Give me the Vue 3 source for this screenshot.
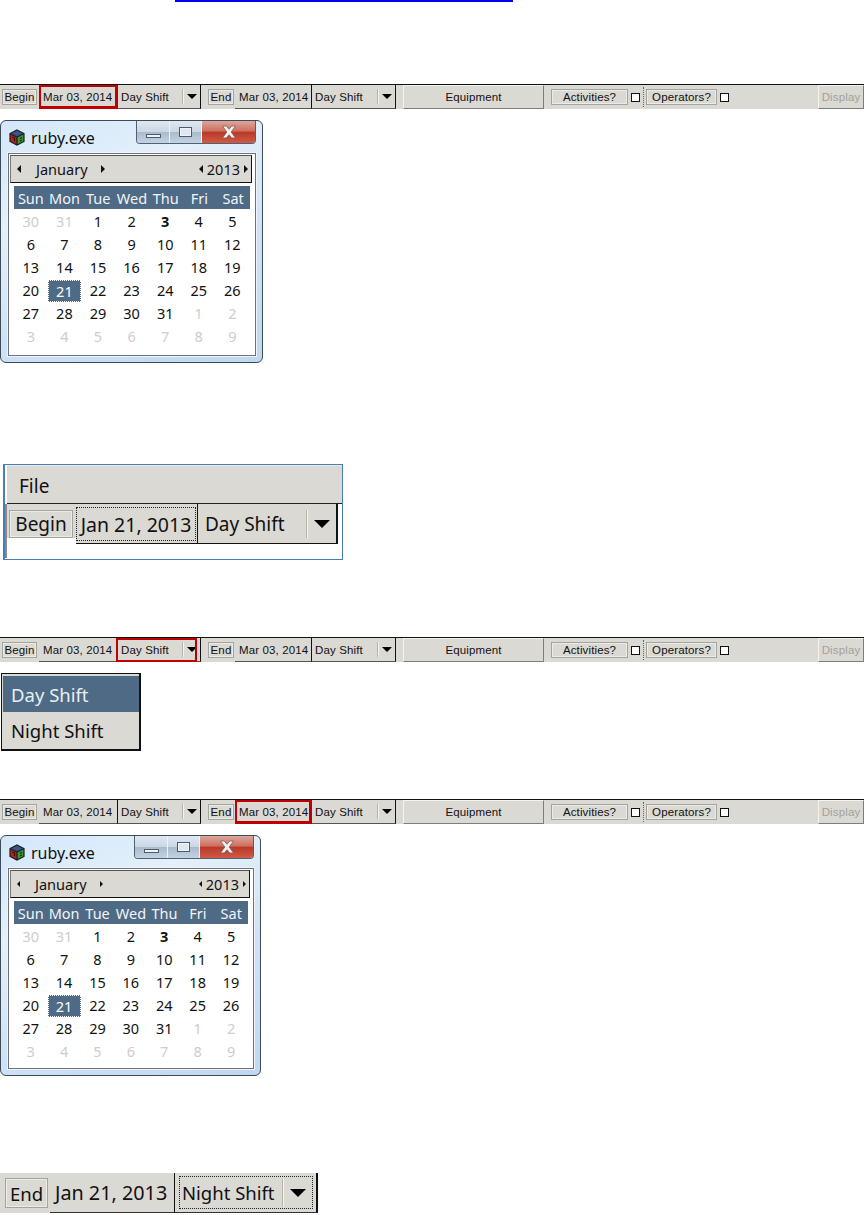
<template>
  <div class="page">
    <div class="link-line"></div>

    <template v-for="block in blocks" :key="block.id">
      <!-- toolbar strip, same in all three shots -->
      <div v-if="block.type === 'toolbar'" class="toolbar" :class="block.cls">
        <span class="tb-btn begin">Begin</span>
        <span class="cell date d1" :class="{ hot: block.hot === 'date1' }">Mar 03, 2014</span>
        <span class="cell shift s1" :class="{ 'hot-shift': block.hot === 'shift1' }">
          <span class="shift-label">Day Shift</span>
          <span class="shift-arrow"><i class="tri"></i></span>
        </span>
        <span class="tb-btn end">End</span>
        <span class="cell date d2" :class="{ hot: block.hot === 'date2' }">Mar 03, 2014</span>
        <span class="cell shift s2">
          <span class="shift-label">Day Shift</span>
          <span class="shift-arrow"><i class="tri"></i></span>
        </span>
        <span class="raised equipment">Equipment</span>
        <span class="tb-btn activities">Activities?</span>
        <span class="check"></span>
        <span class="dots"></span>
        <span class="tb-btn operators">Operators?</span>
        <span class="check"></span>
        <span class="raised display">Display</span>
      </div>

      <!-- ruby.exe calendar window -->
      <div v-else-if="block.type === 'calendar'" class="window" :class="block.cls">
        <div class="titlebar">
          <svg class="cube" width="16" height="17" viewBox="0 0 16 17">
            <path d="M8 1 15 4.500 8 8 1 4.500Z" fill="#35568f" />
            <path d="M1 4.500 8 8V16L1 12.500Z" fill="#b51e1e" />
            <path d="M15 4.500 8 8V16L15 12.500Z" fill="#2f9a2f" />
            <path d="M8 1 15 4.500V12.500L8 16 1 12.500V4.500ZM8 8V16M1 4.500 8 8 15 4.500" fill="none" stroke="#1c1c1c" stroke-width="1.200" />
            <path d="M3.500 8 5.500 9V12M11 9.500 13 8.500M11 12 13 11" fill="none" stroke="#111" stroke-width="1" />
          </svg>
          <span class="win-title">ruby.exe</span>
          <div class="win-btns">
            <span class="wb wb-min"><i></i></span>
            <span class="wb wb-max"><i></i></span>
            <span class="wb wb-close">
              <svg width="18" height="14" viewBox="0 0 16 13">
                <path d="M2 1H5.500L8 4 10.500 1H14L10 6.500 14 12H10.500L8 9 5.500 12H2L6 6.500Z" fill="#f2f2f2" stroke="#7d5a55" stroke-width=".7" />
              </svg>
            </span>
          </div>
        </div>
        <div class="cal-frame">
          <div class="cal-nav">
            <i class="small-left"></i>
            <span class="nav-month">January</span>
            <i class="small-right"></i>
            <span class="nav-spacer"></span>
            <i class="small-left"></i>
            <span class="nav-year">2013</span>
            <i class="small-right"></i>
          </div>
          <div class="cal-body">
            <div class="cal-head">
              <span v-for="d in weekdays" :key="d">{{ d }}</span>
            </div>
            <div class="cal-grid">
              <span
                v-for="(c, i) in days"
                :key="i"
                class="day"
                :class="{ muted: c.muted, sel: c.sel, bold: c.bold }"
              >{{ c.n }}</span>
            </div>
          </div>
        </div>
      </div>

      <!-- zoomed begin row -->
      <div v-else-if="block.type === 'cropBegin'" class="crop-begin">
        <div class="crop-menu"><span>File</span></div>
        <div class="crop-row">
          <span class="big-btn big-begin">Begin</span>
          <span class="big-date"><span class="focus">Jan 21, 2013</span></span>
          <span class="big-shift">
            <span class="big-label">Day Shift</span>
            <span class="big-arrow"><i class="tri big"></i></span>
          </span>
        </div>
        <div class="crop-rest"></div>
      </div>

      <!-- shift dropdown list -->
      <div v-else-if="block.type === 'menu'" class="shift-menu">
        <div class="menu-item on">Day Shift</div>
        <div class="menu-item">Night Shift</div>
      </div>

      <!-- zoomed end row -->
      <div v-else class="crop-end">
        <span class="big-btn big-end">End</span>
        <span class="end-date">Jan 21, 2013</span>
        <span class="end-shift">
          <span class="end-focus">
            <span class="end-label">Night Shift</span>
            <span class="big-arrow"><i class="tri big"></i></span>
          </span>
        </span>
      </div>
    </template>
  </div>
</template>

<script setup>
const blocks = [
  { id: 1, type: 'toolbar', hot: 'date1', cls: 'at-84' },
  { id: 2, type: 'calendar', cls: 'cal-a' },
  { id: 3, type: 'cropBegin' },
  { id: 4, type: 'toolbar', hot: 'shift1', cls: 'at-637' },
  { id: 5, type: 'menu' },
  { id: 6, type: 'toolbar', hot: 'date2', cls: 'at-799' },
  { id: 7, type: 'calendar', cls: 'cal-b' },
  { id: 8, type: 'cropEnd' }
];

const weekdays = ['Sun', 'Mon', 'Tue', 'Wed', 'Thu', 'Fri', 'Sat'];

// 42 cells: trailing December, January 2013, leading February
const days = [];
days.push({ n: 30, muted: true }, { n: 31, muted: true });
for (let n = 1; n <= 31; n++) {
  days.push({ n, bold: n === 3, sel: n === 21 });
}
for (let n = 1; n <= 9; n++) {
  days.push({ n, muted: true });
}
</script>

<style>
html, body {
  margin: 0;
  background: #fff;
}
</style>

<style scoped>
.page {
  width: 866px;
  height: 1215px;
  overflow: hidden;
  background: #fff;
  display: flex;
  flex-direction: column;
  align-items: flex-start;
  font-family: "Liberation Sans", Arial, sans-serif;
  color: #111;
}

.link-line {
  width: 338px;
  height: 2px;
  margin-left: 175px;
  background: #0000ee;
}

/* toolbar */
.toolbar {
  width: 864px;
  height: 25px;
  box-sizing: border-box;
  border-top: 1px solid #111;
  background: #dbd9d4;
  display: flex;
  align-items: stretch;
  font-size: 11.5px;
  letter-spacing: 0.13px;
  flex-shrink: 0;
}
.at-84 { margin-top: 82px; }
.at-637 { margin-top: 77px; }
.at-799 { margin-top: 48px; }

.tb-btn {
  align-self: center;
  height: 16px;
  box-sizing: border-box;
  border: 1px solid #a5a39c;
  box-shadow: inset 0 0 0 1px #ecebe7;
  display: flex;
  align-items: center;
  justify-content: center;
}
.begin { width: 35px; margin-left: 2px; }
.end { width: 26px; margin-left: 7px; }
.activities { width: 77px; margin-left: 7px; }
.operators { width: 71px; margin-left: 1px; }

.cell {
  display: flex;
  align-items: center;
  box-sizing: border-box;
  border-right: 1px solid #111;
  border-bottom: 1px solid #555;
  position: relative;
}
.date { padding-left: 4px; }
.d1 { width: 79px; margin-left: 2px; }
.d2 { width: 77px; margin-left: 1px; }
.shift { padding-left: 3px; }
.s1 { width: 83px; }
.s2 { width: 84px; }
.shift-label { flex: 1; }
.shift-arrow {
  width: 17px;
  height: 15px;
  box-sizing: border-box;
  border-left: 1px solid #f4f3f0;
  box-shadow: -1px 0 0 #b5b3ac;
  display: flex;
  align-items: center;
  justify-content: center;
}
.hot {
  box-shadow: inset 0 0 0 2px #c00000;
  border-color: #c00000;
}
.hot-shift::after {
  content: "";
  position: absolute;
  top: 0;
  bottom: -1px;
  left: -2px;
  right: 3px;
  border: 2px solid #c00000;
  pointer-events: none;
}

.tri {
  display: block;
  width: 0;
  height: 0;
  border-left: 5px solid transparent;
  border-right: 5px solid transparent;
  border-top: 5px solid #000;
}
.tri.big {
  border-left-width: 8px;
  border-right-width: 8px;
  border-top-width: 8px;
}

.raised {
  box-sizing: border-box;
  display: flex;
  align-items: center;
  justify-content: center;
  border-top: 1px solid #f4f3f0;
  border-left: 1px solid #f4f3f0;
  border-right: 1px solid #7f7d76;
  border-bottom: 1px solid #7f7d76;
}
.equipment { width: 141px; margin-left: 7px; }
.display {
  width: 46px;
  margin-left: auto;
  color: #a3a19b;
}

.check {
  align-self: center;
  width: 9px;
  height: 9px;
  box-sizing: border-box;
  border: 1px solid #111;
  background: #fff;
  margin-left: 3px;
}
.dots {
  width: 0;
  margin: 2px 1px 2px 3px;
  border-left: 1px dotted #666;
}

/* window */
.window {
  box-sizing: border-box;
  border: 1px solid #3d4a57;
  border-radius: 6px;
  background: linear-gradient(155deg, #d3e7fa 0%, #e4f0fb 30%, #cfe3f6 60%, #bfd8f1 100%);
  padding: 0 6px 6px 7px;
  display: flex;
  flex-direction: column;
  flex-shrink: 0;
}
.cal-a { width: 263px; height: 243px; margin-top: 11px; }
.cal-b { width: 261px; height: 241px; margin-top: 11px; }

.titlebar {
  height: 32px;
  display: flex;
  align-items: flex-start;
  flex-shrink: 0;
}
.cube { margin: 8px 0 0 1px; }
.win-title {
  margin: 7px 0 0 6px;
  font-family: "Noto Sans", sans-serif;
  font-size: 16px;
  line-height: 20px;
  color: #111;
}
.win-btns {
  margin-left: auto;
  display: flex;
  height: 22px;
  border: 1px solid #54606e;
  border-top: none;
  border-radius: 0 0 4px 4px;
  overflow: hidden;
}
.wb {
  display: flex;
  align-items: center;
  justify-content: center;
  box-sizing: border-box;
  background: linear-gradient(#dfe8f2 0%, #cbd7e4 48%, #a9bacc 50%, #c4d3e3 100%);
  border-left: 1px solid #eef3f8;
}
.wb-min { width: 32px; border-left: none; }
.wb-max { width: 32px; }
.wb-close {
  width: 54px;
  background: linear-gradient(#dca79d 0%, #cf6f60 45%, #b83a28 52%, #cf5b46 100%);
}
.wb-min i {
  display: block;
  width: 15px;
  height: 4px;
  margin-top: 7px;
  box-sizing: border-box;
  border: 1px solid #4d5b6b;
  background: #eef3f8;
}
.wb-max i {
  display: block;
  width: 13px;
  height: 10px;
  box-sizing: border-box;
  border: 1px solid #4d5b6b;
  background: #dfe8f2;
  box-shadow: inset 0 0 0 1px #eef3f8;
}

.cal-frame {
  flex: 1;
  min-height: 0;
  box-sizing: border-box;
  border: 1px solid #6c7278;
  outline: 1px solid #eef4fa;
  padding: 1px;
  background: #fff;
  display: flex;
  flex-direction: column;
}
.cal-nav {
  height: 28px;
  flex-shrink: 0;
  margin-right: 2px;
  box-sizing: border-box;
  background: #dbd9d4;
  border-top: 1px solid #555;
  border-left: 1px solid #777;
  border-right: 1px solid #111;
  border-bottom: 1px solid #111;
  display: flex;
  align-items: center;
  padding: 0 3px 0 6px;
  font-family: "Noto Sans", sans-serif;
  font-size: 14.5px;
}
.nav-month { margin: 0 13px 0 15px; }
.nav-spacer { flex: 1; }
.nav-year { margin: 0 4px 0 4px; }
.small-left, .small-right {
  display: block;
  width: 0;
  height: 0;
  border-top: 4px solid transparent;
  border-bottom: 4px solid transparent;
}
.small-left { border-right: 4px solid #111; }
.small-right { border-left: 4px solid #111; }
/* second shot was scaled down, its arrows come out tiny */
.cal-b .small-left, .cal-b .small-right {
  border-top-width: 3px;
  border-bottom-width: 3px;
}
.cal-b .small-left { border-right-width: 3px; }
.cal-b .small-right { border-left-width: 3px; }

.cal-body {
  flex: 1;
  padding: 3px 4px 0 4px;
  font-family: "Noto Sans", sans-serif;
  font-size: 14.5px;
}
.cal-head {
  height: 23px;
  background: #4e6a85;
  color: #f2f5f8;
  display: grid;
  grid-template-columns: repeat(7, 1fr);
  align-items: center;
  justify-items: center;
}
.cal-grid {
  display: grid;
  grid-template-columns: repeat(7, 33.6px);
  grid-auto-rows: 23px;
  justify-items: center;
  align-items: center;
  margin-top: 1px;
}
.cal-b .cal-grid { grid-template-columns: repeat(7, 33.4px); }
.day { color: #111; line-height: 21px; }
.muted { color: #cfcdc9; }
.bold { font-weight: 700; }
.sel {
  width: 33px;
  height: 22px;
  box-sizing: border-box;
  border: 1px dotted #fff;
  background: #4e6a85;
  color: #fff;
  text-align: center;
  line-height: 20px;
}

/* zoomed begin row */
.crop-begin {
  width: 340px;
  height: 96px;
  margin: 101px 0 0 3px;
  box-sizing: border-box;
  border: 1px solid #4a7db5;
  border-left-width: 2px;
  background: #fff;
  flex-shrink: 0;
  font-family: "Noto Sans", sans-serif;
  font-size: 19px;
}
.crop-menu {
  height: 39px;
  box-sizing: border-box;
  margin-left: 2px;
  background: #dbd9d4;
  border-top: 1px solid #eceae6;
  border-bottom: 1px solid #222;
  display: flex;
  align-items: center;
  padding: 2px 0 0 12px;
}
.crop-row {
  height: 40px;
  padding-left: 2px;
  display: flex;
  align-items: stretch;
  background: linear-gradient(#dbd9d4 85%, #fff 85%);
  border-left: 2px solid #8a8a8a;
  margin-right: 4px;
}
.crop-rest {
  height: 14px;
  border-left: 2px solid #8a8a8a;
}
.big-btn {
  align-self: center;
  box-sizing: border-box;
  border: 1px solid #a5a39c;
  box-shadow: inset 0 0 0 1px #ecebe7;
  display: flex;
  align-items: center;
  justify-content: center;
}
.big-begin { width: 64px; height: 28px; margin-bottom: 1px; }
.big-date {
  width: 122px;
  margin-left: 3px;
  box-sizing: border-box;
  background: #dbd9d4;
  border-right: 1px solid #111;
  border-bottom: 1px solid #111;
  padding: 3px 1px 2px 0;
  display: flex;
}
.focus {
  flex: 1;
  border: 1px dotted #222;
  display: flex;
  align-items: center;
  justify-content: center;
  white-space: nowrap;
  font-size: 19.500px;
}
.big-shift {
  flex: 1;
  box-sizing: border-box;
  background: #dbd9d4;
  border-right: 2px solid #111;
  border-bottom: 1px solid #111;
  display: flex;
  align-items: center;
  padding-left: 7px;
}
.big-label { flex: 1; }
.big-arrow {
  width: 29px;
  height: 28px;
  box-sizing: border-box;
  border-left: 1px solid #f4f3f0;
  box-shadow: -1px 0 0 #b5b3ac;
  display: flex;
  align-items: center;
  justify-content: center;
}

/* dropdown list */
.shift-menu {
  width: 140px;
  height: 78px;
  margin: 11px 0 0 1px;
  box-sizing: border-box;
  border: 1px solid #111;
  border-right-width: 2px;
  border-bottom-width: 2px;
  background: #dbd9d4;
  padding: 2px 0 0 1px;
  font-family: "Noto Sans", sans-serif;
  font-size: 18.500px;
  flex-shrink: 0;
}
.menu-item {
  height: 36px;
  display: flex;
  align-items: center;
  padding-left: 8px;
}
.menu-item.on {
  background: #4e6a85;
  color: #e8eef4;
}

/* zoomed end row */
.crop-end {
  width: 318px;
  height: 40px;
  margin-top: 97px;
  box-sizing: border-box;
  background: #dbd9d4;
  display: flex;
  align-items: stretch;
  font-family: "Noto Sans", sans-serif;
  font-size: 18.500px;
  flex-shrink: 0;
}
.big-end { width: 43px; height: 30px; margin-left: 5px; }
.end-date {
  width: 125px;
  margin-left: 2px;
  padding-left: 5px;
  box-sizing: border-box;
  border-right: 1px solid #111;
  border-bottom: 1px solid #333;
  display: flex;
  align-items: center;
  white-space: nowrap;
  font-size: 19.800px;
}
.end-shift {
  flex: 1;
  box-sizing: border-box;
  border-right: 2px solid #111;
  border-bottom: 1px solid #333;
  padding: 3px 3px 3px 4px;
  display: flex;
}
.end-focus {
  flex: 1;
  border: 1px dotted #222;
  display: flex;
  align-items: center;
  padding-left: 2px;
}
.end-label { flex: 1; }
</style>
